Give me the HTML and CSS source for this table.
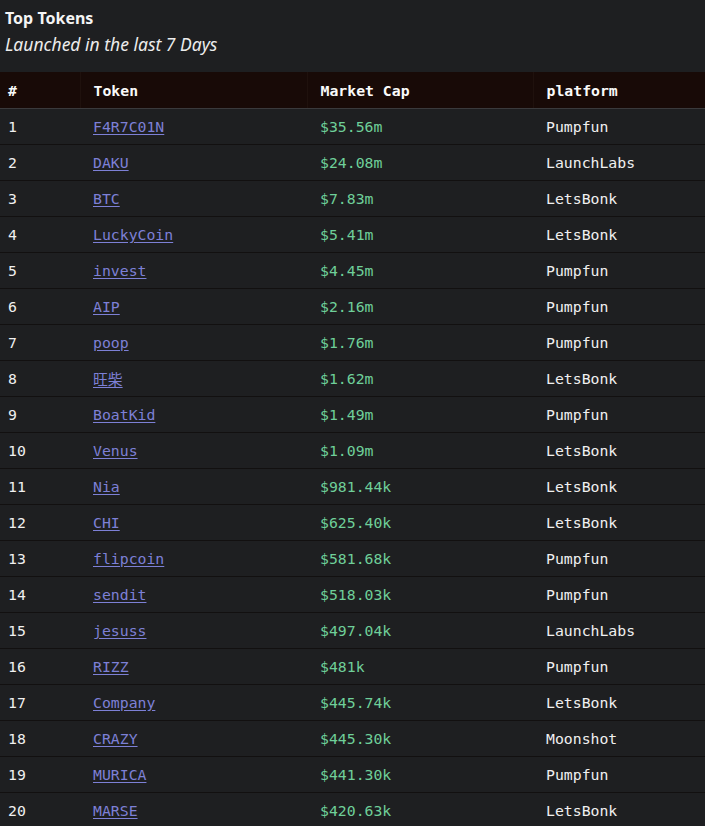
FILE: index.html
```html
<!DOCTYPE html>
<html lang="en">
<head>
<meta charset="utf-8">
<title>Top Tokens</title>
<link rel="stylesheet" href="styles.css">
</head>
<body>
<header class="intro">
  <h1 class="title">Top Tokens</h1>
  <p class="subtitle">Launched in the last 7 Days</p>
</header>
<table class="tokens">
  <colgroup>
    <col class="c-rank"><col class="c-token"><col class="c-cap"><col class="c-plat">
  </colgroup>
  <thead>
    <tr><th>#</th><th>Token</th><th>Market Cap</th><th>platform</th></tr>
  </thead>
  <tbody>
    <tr><td>1</td><td><a href="#">F4R7C01N</a></td><td class="cap">$35.56m</td><td>Pumpfun</td></tr>
    <tr><td>2</td><td><a href="#">DAKU</a></td><td class="cap">$24.08m</td><td>LaunchLabs</td></tr>
    <tr><td>3</td><td><a href="#">BTC</a></td><td class="cap">$7.83m</td><td>LetsBonk</td></tr>
    <tr><td>4</td><td><a href="#">LuckyCoin</a></td><td class="cap">$5.41m</td><td>LetsBonk</td></tr>
    <tr><td>5</td><td><a href="#">invest</a></td><td class="cap">$4.45m</td><td>Pumpfun</td></tr>
    <tr><td>6</td><td><a href="#">AIP</a></td><td class="cap">$2.16m</td><td>Pumpfun</td></tr>
    <tr><td>7</td><td><a href="#">poop</a></td><td class="cap">$1.76m</td><td>Pumpfun</td></tr>
    <tr><td>8</td><td><a href="#">旺柴</a></td><td class="cap">$1.62m</td><td>LetsBonk</td></tr>
    <tr><td>9</td><td><a href="#">BoatKid</a></td><td class="cap">$1.49m</td><td>Pumpfun</td></tr>
    <tr><td>10</td><td><a href="#">Venus</a></td><td class="cap">$1.09m</td><td>LetsBonk</td></tr>
    <tr><td>11</td><td><a href="#">Nia</a></td><td class="cap">$981.44k</td><td>LetsBonk</td></tr>
    <tr><td>12</td><td><a href="#">CHI</a></td><td class="cap">$625.40k</td><td>LetsBonk</td></tr>
    <tr><td>13</td><td><a href="#">flipcoin</a></td><td class="cap">$581.68k</td><td>Pumpfun</td></tr>
    <tr><td>14</td><td><a href="#">sendit</a></td><td class="cap">$518.03k</td><td>Pumpfun</td></tr>
    <tr><td>15</td><td><a href="#">jesuss</a></td><td class="cap">$497.04k</td><td>LaunchLabs</td></tr>
    <tr><td>16</td><td><a href="#">RIZZ</a></td><td class="cap">$481k</td><td>Pumpfun</td></tr>
    <tr><td>17</td><td><a href="#">Company</a></td><td class="cap">$445.74k</td><td>LetsBonk</td></tr>
    <tr><td>18</td><td><a href="#">CRAZY</a></td><td class="cap">$445.30k</td><td>Moonshot</td></tr>
    <tr><td>19</td><td><a href="#">MURICA</a></td><td class="cap">$441.30k</td><td>Pumpfun</td></tr>
    <tr><td>20</td><td><a href="#">MARSE</a></td><td class="cap">$420.63k</td><td>LetsBonk</td></tr>
  </tbody>
</table>
</body>
</html>
```
FILE: styles.css
```css
html, body {
  margin: 0;
  padding: 0;
  background: #1e1f21;
  color: #f2f2f2;
}
.intro {
  padding: 8px 5px 0 5px;
  height: 72px;
  box-sizing: border-box;
  font-family: "Noto Sans", "Open Sans", sans-serif;
}
.title {
  margin: 0;
  font-size: 16px;
  line-height: 20px;
  font-weight: 700;
  color: #f4f4f4;
}
.subtitle {
  margin: 4px 0 0 0;
  font-size: 17.5px;
  line-height: 24px;
  font-style: italic;
  color: #ececec;
}
.tokens {
  width: 100%;
  border-collapse: collapse;
  table-layout: fixed;
  font-family: "DejaVu Sans Mono", "Liberation Mono", "Noto Sans CJK SC", monospace;
  font-size: 14.8px;
}
.c-rank { width: 80px; }
.c-token { width: 227px; }
.c-cap { width: 226px; }
.tokens th {
  background: #180a07;
  height: 36px;
  padding: 0 0 0 13px;
  text-align: left;
  font-weight: 700;
  color: #fafafa;
  border-left: 1px solid #1f110d;
  border-bottom: 1px solid #3a3a3c;
}
.tokens th:first-child {
  border-left: none;
  padding-left: 8px;
}
.tokens td {
  height: 35px;
  padding: 0 0 0 13px;
  color: #f0f0f0;
  border-bottom: 1px solid #121010;
}
.tokens td:first-child {
  padding-left: 8px;
}
.tokens a {
  color: #7d80d6;
  text-decoration: underline;
  text-underline-offset: 2px;
}
.tokens .cap {
  color: #6fcf99;
}
```
